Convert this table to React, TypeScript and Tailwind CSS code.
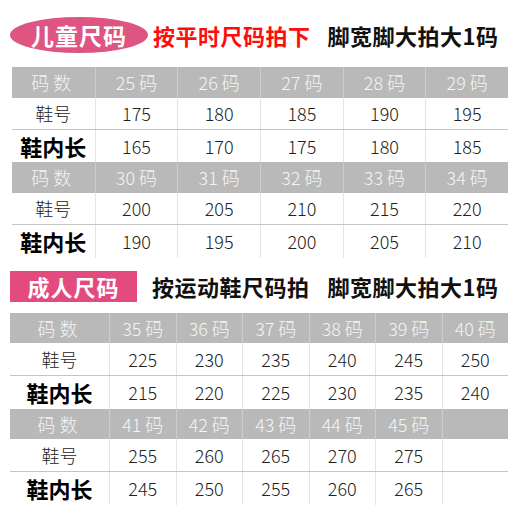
const font = { fontFamily: '"Noto Sans CJK SC", "Noto Sans", sans-serif' };

type Block = { sizes: string[]; shoe: string[]; inner: string[] };

const kids: Block[] = [
  { sizes: ['25', '26', '27', '28', '29'], shoe: ['175', '180', '185', '190', '195'], inner: ['165', '170', '175', '180', '185'] },
  { sizes: ['30', '31', '32', '33', '34'], shoe: ['200', '205', '210', '215', '220'], inner: ['190', '195', '200', '205', '210'] },
];

const adults: Block[] = [
  { sizes: ['35', '36', '37', '38', '39', '40'], shoe: ['225', '230', '235', '240', '245', '250'], inner: ['215', '220', '225', '230', '235', '240'] },
  { sizes: ['41', '42', '43', '44', '45', ''], shoe: ['255', '260', '265', '270', '275', ''], inner: ['245', '250', '255', '260', '265', ''] },
];

function SizeBlock({ block, cols, headH, rowH }: { block: Block; cols: string; headH: string; rowH: string }) {
  return (
    <div>
      <div className={`grid ${cols} ${headH} bg-[#b9b9b9] text-[#f4f4f4] text-[18px] font-light`}>
        <div className="flex items-center justify-center tracking-[4px]">码数</div>
        {block.sizes.map((s, i) => (
          <div key={i} className="flex items-center justify-center border-l border-[#cdcdcd]">
            {s ? `${s} 码` : ''}
          </div>
        ))}
      </div>
      <div className={`grid ${cols} ${rowH} bg-white text-[#222] text-[18px] font-light border-b border-[#c4c4c4]`}>
        <div className="flex items-center justify-center">鞋号</div>
        {block.shoe.map((s, i) => (
          <div key={i} className="flex items-center justify-center border-l border-[#e4e4e4]">{s}</div>
        ))}
      </div>
      <div className={`grid ${cols} ${rowH} bg-white text-[#222] text-[18px] font-light`}>
        <div className="flex items-center justify-center text-[22px] font-bold text-black">鞋内长</div>
        {block.inner.map((s, i) => (
          <div key={i} className="flex items-center justify-center border-l border-[#e4e4e4]">{s}</div>
        ))}
      </div>
    </div>
  );
}

export default function App() {
  return (
    <div className="w-[520px] h-[520px] bg-white overflow-hidden" style={font}>
      <div className="flex items-center h-[36px] mt-[17px] pl-[10px]">
        <div className="w-[138px] h-[36px] rounded-[50%] bg-[#de5581] flex items-center justify-center text-white font-bold text-[23px] tracking-[1px]">
          儿童尺码
        </div>
        <div className="ml-[5px] text-[#ff0d0d] font-bold text-[22px] tracking-[0.5px]">按平时尺码拍下</div>
        <div className="ml-[17px] text-[#111] font-bold text-[22px] tracking-[0.5px]">脚宽脚大拍大1码</div>
      </div>
      <div className="mt-[14px] ml-[12px] w-[496px]">
        {kids.map((b, i) => (
          <SizeBlock key={i} block={b} cols="grid-cols-6" headH="h-[31px]" rowH="h-[32px]" />
        ))}
      </div>
      <div className="flex items-center h-[31px] mt-[14px] pl-[10px]">
        <div className="w-[127px] h-[31px] bg-[#e34a7e] flex items-center justify-center text-white font-bold text-[22px] tracking-[1px]">
          成人尺码
        </div>
        <div className="ml-[15px] text-[#111] font-bold text-[22px] tracking-[0.5px]">按运动鞋尺码拍</div>
        <div className="ml-[18px] text-[#111] font-bold text-[22px] tracking-[0.5px]">脚宽脚大拍大1码</div>
      </div>
      <div className="mt-[11px] ml-[10px] w-[498px]">
        {adults.map((b, i) => (
          <SizeBlock key={i} block={b} cols="grid-cols-[99px_repeat(6,1fr)]" headH="h-[30px]" rowH="h-[33px]" />
        ))}
      </div>
    </div>
  );
}
